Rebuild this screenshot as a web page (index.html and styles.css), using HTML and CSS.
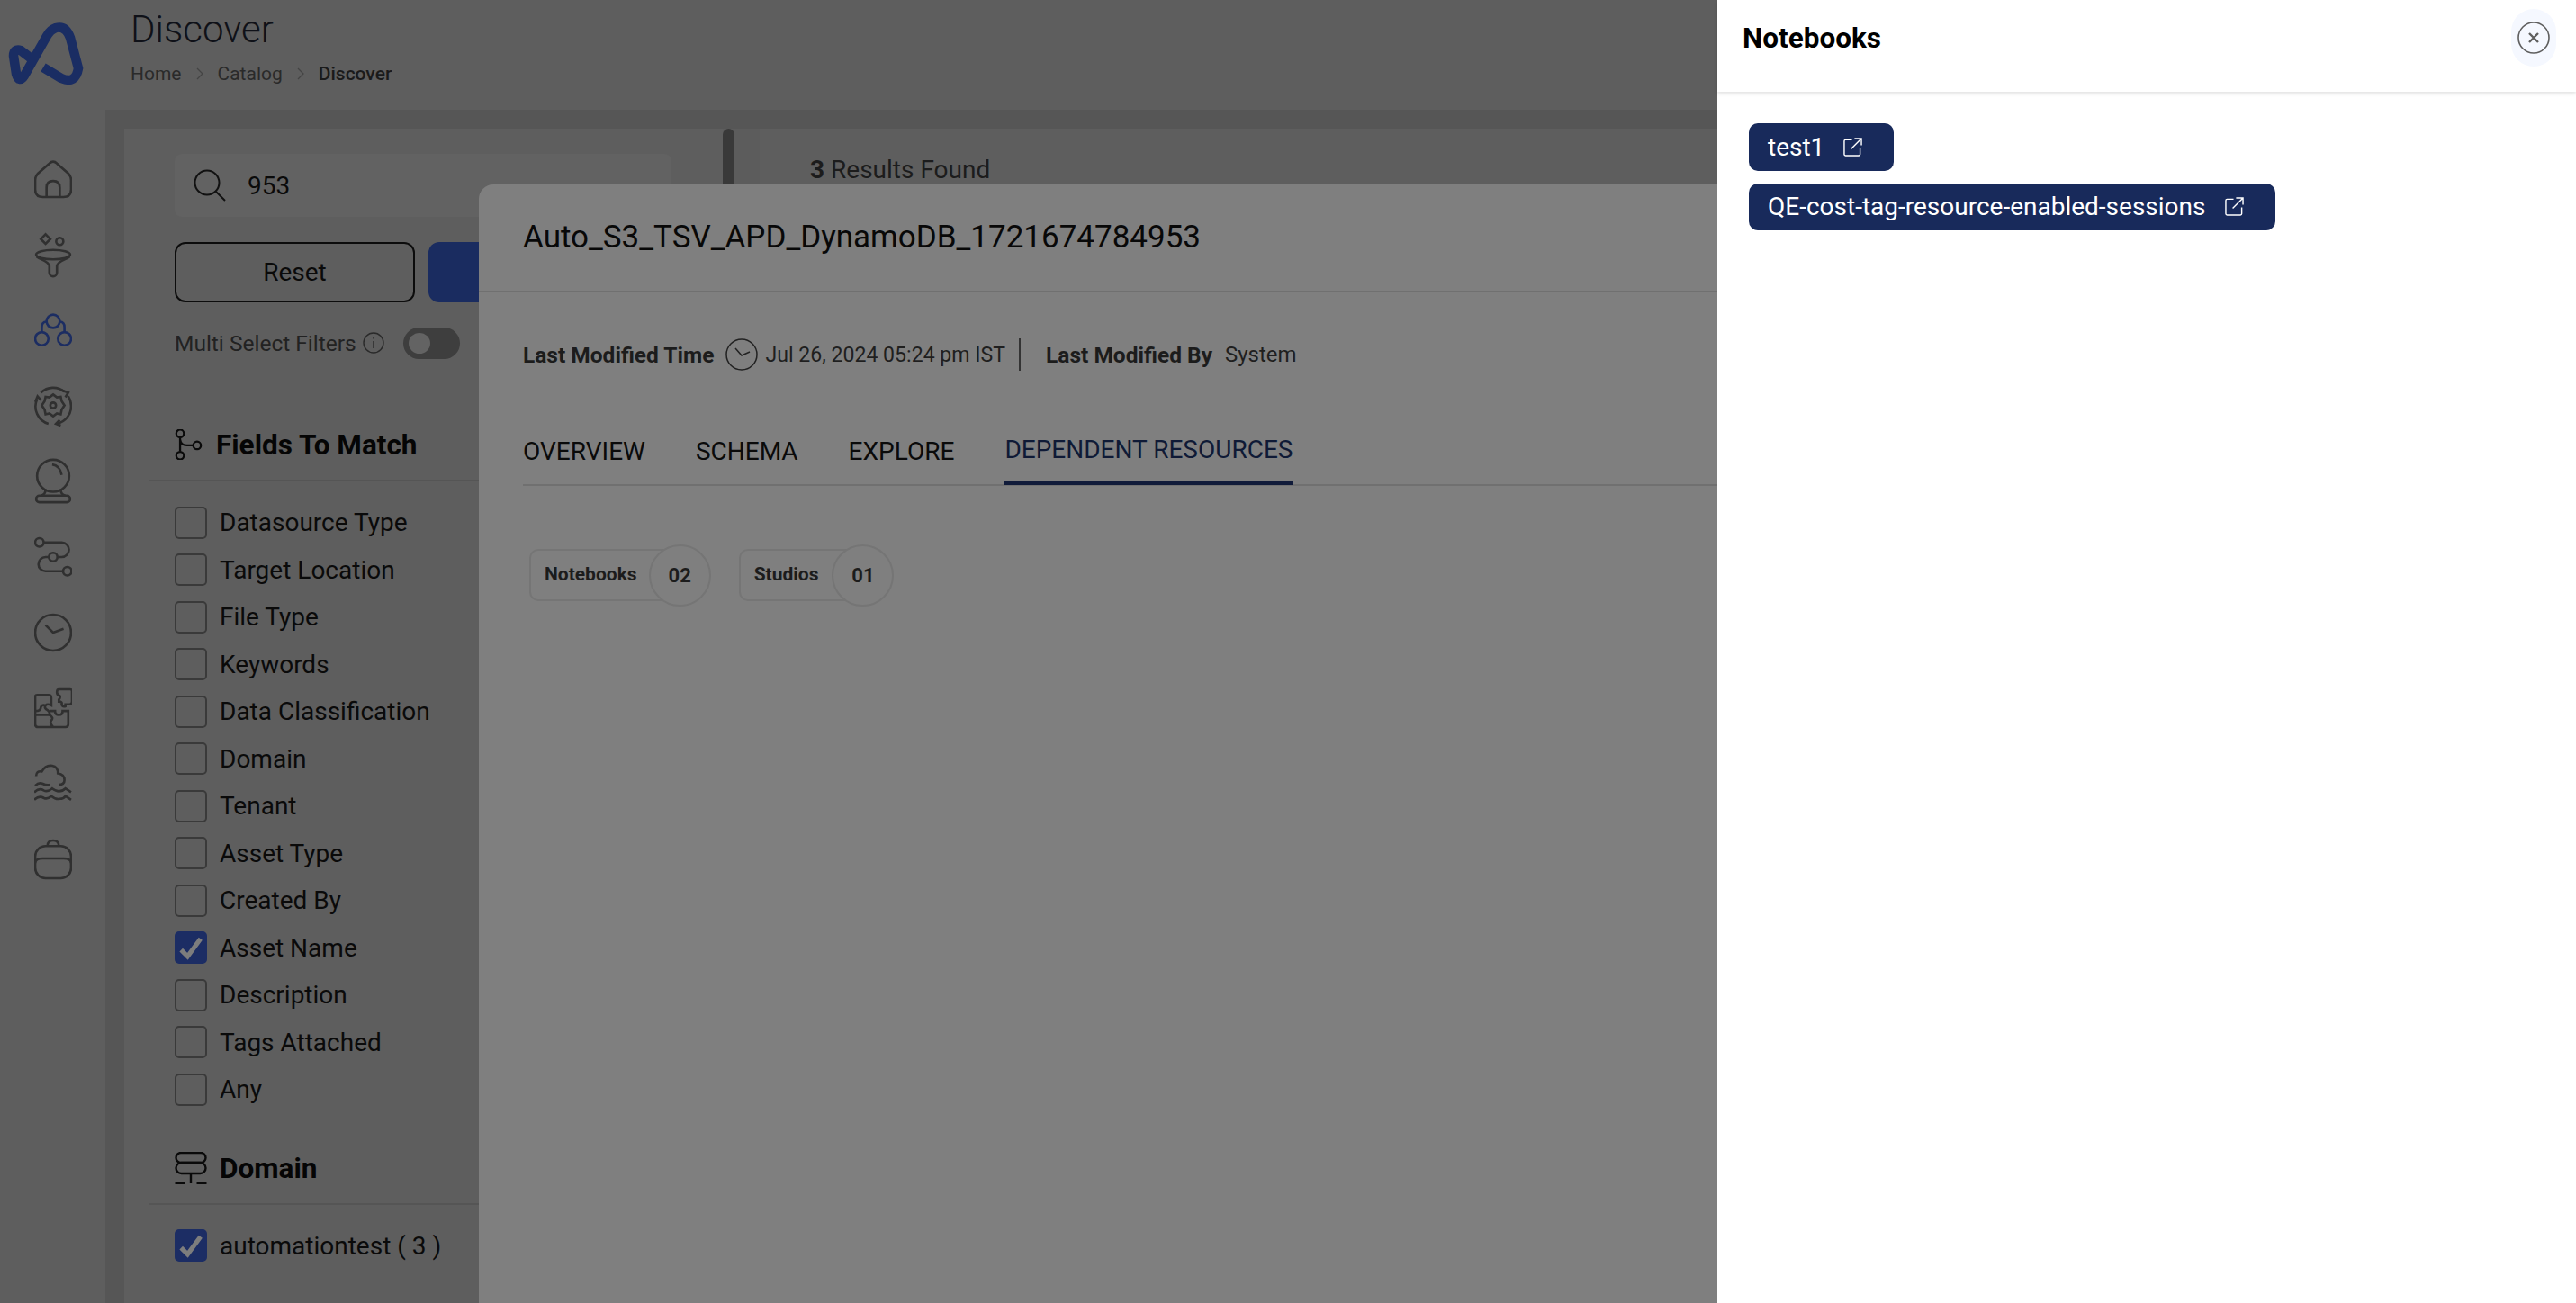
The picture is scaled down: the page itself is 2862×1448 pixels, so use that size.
FILE: index.html
```html
<!DOCTYPE html>
<html lang="en">
<head>
<meta charset="utf-8">
<title>Discover</title>
<link rel="stylesheet" href="styles.css">
</head>
<body>
<div class="app">
  <aside class="sidebar">
    <svg class="logo" viewBox="0 0 100 100" fill="none"><path d="M48 75 L68 87 Q84 94 87 76 L78 42 Q73 28 62 31 Q56 33 52 40 L27 84 Q21 93 18 82 L15 62 Q15 54 23 56 L36 66" stroke="#1a2d63" stroke-width="10.500"/></svg>
    <nav class="nav">
      <svg class="nav-icon" viewBox="0 0 40 40"><path d="M20 1.500 Q22 1.500 24 3.500 L36 14 Q39 17 39 21 V31 Q39 39 31 39 H9 Q1 39 1 31 V21 Q1 17 4 14 L16 3.500 Q18 1.500 20 1.500Z M13 39 V29 Q13 22 20 22 Q27 22 27 29 V39"/></svg>
      <svg class="nav-icon" viewBox="0 0 40 46"><path d="M12 1.500 L17 6.500 L12 11.500 L7 6.500Z"/><circle cx="27" cy="9" r="3.800"/><ellipse cx="20" cy="23" rx="18" ry="5"/><path d="M2.500 25 C8 29 15 30 16 35 V42 A4 4 0 0 0 24 42 V35 C25 30 32 29 37.500 25"/></svg>
      <svg class="nav-icon nav-active" viewBox="0 0 40 36"><circle cx="20" cy="8.500" r="7"/><circle cx="8" cy="27" r="7"/><circle cx="32" cy="27" r="7"/><path d="M13 9 Q8 9 8 15 V20 M27 9 Q32 9 32 15 V20"/></svg>
      <svg class="nav-icon" viewBox="0 0 40 42"><path d="M3 14 A19 19 0 0 0 15 40 M24 40 A19 19 0 0 0 39 21 A19 19 0 0 0 36 11 M32 6 A19 19 0 0 0 7 7"/><path d="M20 9 L24 12 L28 11.500 L29 16 L32 20.500 L29 25 L28 30 L24 29 L20 32 L16 29 L12 30 L11 25 L8 20.500 L11 16 L12 11.500 L16 12Z"/><circle cx="20" cy="20.500" r="3"/><path d="M29 4.500 L36 7 L33 12 M1 17 L3.500 11 L7 15 M27 36 L23 40 L28 42"/></svg>
      <svg class="nav-icon" viewBox="0 0 40 48"><circle cx="20" cy="18" r="17"/><path d="M19 6 Q27 7 29 17"/><path d="M12 32 Q12 38 7 39 M28 32 Q28 38 33 39"/><rect x="2" y="39" width="36" height="7" rx="3.500"/></svg>
      <svg class="nav-icon" viewBox="0 0 40 42"><circle cx="5.500" cy="5.500" r="4.500"/><circle cx="20" cy="21" r="4.500"/><circle cx="35" cy="36" r="4.500"/><path d="M10 5.500 H29 A7.700 7.700 0 0 1 29 21 H24.500 M15.500 21 H12 A7.500 7.500 0 0 0 12 36 H30.500"/></svg>
      <svg class="nav-icon" viewBox="0 0 40 42"><circle cx="20" cy="21" r="19"/><path d="M12 13 L20 21 L31 17"/></svg>
      <svg class="nav-icon" viewBox="0 0 40 42"><path d="M3 7 H15 Q18 7 18 10 V18 Q14 16 12 18 Q10 21 14 23 Q17 25 16 28 H1 V9 Q1 7 3 7Z"/><path d="M1 24 Q7 24 7 20 Q8 17 11 18 M1 28 V38 Q1 41 4 41 H33 Q36 41 36 38 V24 H30 Q30 28 26 28 Q22 28 22 24 H17 M16 28 Q21 31 18 34 Q16 37 20 41"/><path d="M26 1 H38 Q40 1 40 3 V14 Q40 17 36 17 H33 V19 Q30 20 29 17 Q30 14 26 14 V12 Q28 10 27 8 Q24 7 24 4 Q24 1 26 1Z"/></svg>
      <svg class="nav-icon" viewBox="0 0 40 40"><path d="M2 12 Q2 6 8 7 Q12 0 19 1 Q25 2 25 9 Q32 10 32 16 Q32 21 26 21"/><path d="M1 22 Q5 18 9 20 Q13 22 17 21 M0 29 Q5 24 10 27 Q14 29 19 25 Q23 28 26 28 Q30 28 33 25 L39 29 M0 37 Q5 32 10 35 Q14 37 18 33 Q23 37 27 36 Q31 36 33 33 L39 37"/></svg>
      <svg class="nav-icon" viewBox="0 0 40 42"><path d="M14 7 Q14 1 20 1 Q26 1 26 7"/><rect x="1" y="7" width="38" height="34" rx="11"/><path d="M1 25 Q1 20 9 20 H31 Q39 20 39 25"/></svg>
    </nav>
  </aside>

  <main class="main">
    <header class="topbar">
      <h1 class="page-title">Discover</h1>
      <div class="crumbs">
        <span>Home</span>
        <svg class="crumb-sep" viewBox="0 0 10 16"><path d="M2 2 L8 8 L2 14"/></svg>
        <span>Catalog</span>
        <svg class="crumb-sep" viewBox="0 0 10 16"><path d="M2 2 L8 8 L2 14"/></svg>
        <strong>Discover</strong>
      </div>
    </header>
    <div class="content">
      <section class="filters">
        <div class="search">
          <svg class="search-icon" viewBox="0 0 36 36"><circle cx="15" cy="15" r="13.500"/><path d="M25 25 L35 35"/></svg>
          <span>953</span>
        </div>
        <div class="actions">
          <div class="btn-reset">Reset</div>
          <div class="btn-apply"></div>
        </div>
        <div class="multi">
          <span>Multi Select Filters</span>
          <svg class="info" viewBox="0 0 24 24"><circle cx="12" cy="12" r="11"/><path d="M12 10 V18 M12 6 V7.500"/></svg>
          <div class="toggle"><i class="knob"></i></div>
        </div>
        <div class="group-head group-fields">
          <svg class="head-icon" viewBox="0 0 32 36"><circle cx="6" cy="5" r="4.500"/><circle cx="6" cy="31" r="4.500"/><circle cx="26" cy="19" r="4.500"/><path d="M6 10 V26 M6 12 Q7 19 14 19 H21"/></svg>
          <span>Fields To Match</span>
        </div>
        <ul class="checks">
          <li class="check"><i class="box"></i>Datasource Type</li>
          <li class="check"><i class="box"></i>Target Location</li>
          <li class="check"><i class="box"></i>File Type</li>
          <li class="check"><i class="box"></i>Keywords</li>
          <li class="check"><i class="box"></i>Data Classification</li>
          <li class="check"><i class="box"></i>Domain</li>
          <li class="check"><i class="box"></i>Tenant</li>
          <li class="check"><i class="box"></i>Asset Type</li>
          <li class="check"><i class="box"></i>Created By</li>
          <li class="check"><i class="box box-on"><svg viewBox="0 0 35 35"><path d="M7 20 L14 27 L28 8"/></svg></i>Asset Name</li>
          <li class="check"><i class="box"></i>Description</li>
          <li class="check"><i class="box"></i>Tags Attached</li>
          <li class="check"><i class="box"></i>Any</li>
        </ul>
        <div class="group-head group-domain">
          <svg class="head-icon head-domain" viewBox="0 0 35 36"><rect x="1" y="1" width="33" height="11" rx="5.500"/><rect x="1" y="12" width="33" height="12" rx="6"/><path d="M17.500 24 V35 M0 35 H11 M24 35 H35"/></svg>
          <span>Domain</span>
        </div>
        <ul class="checks">
          <li class="check"><i class="box box-on"><svg viewBox="0 0 35 35"><path d="M7 20 L14 27 L28 8"/></svg></i>automationtest ( 3 )</li>
        </ul>
      </section>
      <div class="scroll-track"><i class="scroll-thumb"></i></div>
      <section class="results"><b>3</b> Results Found</section>
    </div>
  </main>
</div>

<section class="modal">
  <h2 class="modal-title">Auto_S3_TSV_APD_DynamoDB_1721674784953</h2>
  <div class="meta">
    <b>Last Modified Time</b>
    <svg class="meta-clock" viewBox="0 0 36 36"><circle cx="18" cy="18" r="17"/><path d="M11 11 L18 19 L27 15"/></svg>
    <span class="meta-date">Jul 26, 2024 05:24 pm IST</span>
    <i class="meta-sep"></i>
    <b>Last Modified By</b>
    <span class="meta-by">System</span>
  </div>
  <div class="tabs">
    <span class="tab">OVERVIEW</span>
    <span class="tab">SCHEMA</span>
    <span class="tab">EXPLORE</span>
    <span class="tab tab-active">DEPENDENT RESOURCES</span>
  </div>
  <div class="counts">
    <div class="count"><span class="count-label">Notebooks</span><span class="count-num">02</span></div>
    <div class="count"><span class="count-label count-label-wide">Studios</span><span class="count-num">01</span></div>
  </div>
</section>

<aside class="drawer">
  <header class="drawer-head">
    <h2 class="drawer-title">Notebooks</h2>
    <div class="close">
      <svg viewBox="0 0 36 36"><circle cx="18" cy="18" r="17"/><path d="M13 13 L23 23 M23 13 L13 23"/></svg>
    </div>
  </header>
  <div class="links">
    <a class="link">test1<svg viewBox="0 0 22 22"><path d="M10 2.500 H2.500 Q1 2.500 1 4 V19.500 Q1 21 2.500 21 H18 Q19.500 21 19.500 19.500 V12 M9 13 L20.500 1.500 M13 1 H21 V9"/></svg></a>
    <a class="link">QE-cost-tag-resource-enabled-sessions<svg viewBox="0 0 22 22"><path d="M10 2.500 H2.500 Q1 2.500 1 4 V19.500 Q1 21 2.500 21 H18 Q19.500 21 19.500 19.500 V12 M9 13 L20.500 1.500 M13 1 H21 V9"/></svg></a>
  </div>
</aside>
</body>
</html>
```

FILE: styles.css
```css
* { box-sizing: border-box; }
html, body { margin: 0; height: 100%; overflow: hidden; }
body { font-family: Roboto, "Liberation Sans", sans-serif; background: #5f5f5f; color: #0a0a0a; position: relative; }
h1, h2, ul { margin: 0; padding: 0; font-weight: inherit; }
ul { list-style: none; }
i { display: block; }

.app { display: flex; height: 1448px; }

.sidebar { width: 117px; flex: none; background: #5e5e5e; display: flex; flex-direction: column; align-items: center; }
.logo { width: 100px; height: 100px; align-self: flex-start; display: block; }
.nav { margin-top: 57px; display: flex; flex-direction: column; align-items: center; }
.nav-icon { width: 42px; height: 84px; fill: none; stroke: #303030; stroke-width: 2.5; display: block; }
.nav-active { stroke: #1c2d62; }

.main { flex: 1; min-width: 0; display: flex; flex-direction: column; background: #565656; }
.topbar { height: 122px; flex: none; background: #5e5e5e; padding: 8px 0 0 28px; }
.page-title { font-size: 42px; line-height: 50px; font-weight: 300; color: #0f1118; }
.crumbs { display: flex; align-items: center; font-size: 21px; line-height: 24px; margin-top: 12px; color: #2a2a2a; }
.crumbs strong { font-weight: 500; color: #1a1a1a; }
.crumb-sep { width: 10px; height: 16px; margin: 0 15px; fill: none; stroke: #444; stroke-width: 1.3; }

.content { flex: 1; display: flex; padding: 21px 0 0 21px; min-height: 0; }
.filters { width: 665px; flex: none; background: #5e5e5e; padding: 28px 0 0 56px; position: relative; }
.search { width: 552px; height: 70px; background: #626262; border-radius: 8px; display: flex; align-items: center; padding-left: 21px; gap: 24px; font-size: 28px; }
.search-icon { width: 36px; height: 36px; fill: none; stroke: #111; stroke-width: 2; }
.actions { display: flex; gap: 15px; margin-top: 28px; }
.btn-reset { width: 267px; height: 67px; border: 2px solid #0c0c0c; border-radius: 12px; display: flex; align-items: center; justify-content: center; font-size: 28px; }
.btn-apply { width: 259px; height: 67px; background: #1a2c60; border-radius: 12px; }
.multi { display: flex; align-items: center; height: 36px; margin-top: 27px; font-size: 24.500px; color: #222; }
.info { width: 24px; height: 24px; margin-left: 7px; fill: none; stroke: #2a2a2a; stroke-width: 1.4; }
.toggle { width: 63px; height: 35px; margin-left: 21px; border-radius: 18px; background: #3e3e3e; padding: 6px; }
.knob { width: 24px; height: 23px; border-radius: 50%; background: #636363; }

.group-head { display: flex; align-items: center; gap: 15px; font-size: 31.500px; font-weight: 700; color: #050505; border-bottom: 2px solid #555; margin-left: -28px; padding-left: 28px; }
.group-fields { height: 70px; margin-top: 66px; padding-bottom: 10px; }
.group-domain { height: 73px; margin-top: 37px; padding-bottom: 6px; gap: 14px; }
.head-icon { width: 31px; height: 34px; fill: none; stroke: #0a0a0a; stroke-width: 2.4; }
.head-domain { width: 36px; height: 36px; }

.checks { padding-top: 27.500px; }
.check { display: flex; align-items: center; gap: 14px; height: 36px; margin-bottom: 16.500px; font-size: 28px; color: #0a0a0a; }
.box { width: 36px; height: 36px; flex: none; border: 2px solid #3a3a3a; border-radius: 5px; }
.box-on { background: #1c2d64; border-color: #1c2d64; position: relative; }
.box-on svg { position: absolute; inset: -2px; width: 36px; height: 36px; fill: none; stroke: #7d7d7d; stroke-width: 5; }

.scroll-track { width: 41px; flex: none; background: #5c5c5c; }
.scroll-thumb { width: 13px; height: 300px; border-radius: 7px; background: #393939; }
.results { flex: 1; background: #5e5e5e; padding: 30px 0 0 56px; font-size: 28px; line-height: 32px; color: #1c1c1c; }
.results b { font-weight: 700; }

.modal { position: absolute; left: 532px; top: 205px; width: 1400px; height: 1243px; background: #7f7f7f; border-top-left-radius: 16px; }
.modal-title { height: 120px; padding: 37px 0 0 49px; font-size: 35px; line-height: 44px; color: #080808; border-bottom: 2px solid #707070; }
.meta { display: flex; align-items: center; margin: 51px 0 0 49px; height: 36px; font-size: 24px; color: #1f1f1f; }
.meta b { font-size: 24.500px; font-weight: 700; color: #1c1c1c; }
.meta-clock { width: 36px; height: 36px; margin: 0 8px 0 13px; fill: none; stroke: #222; stroke-width: 1.500; }
.meta-date { font-size: 23.100px; }
.meta-sep { width: 2px; height: 36px; background: #333; margin: 0 28px 0 15px; }
.meta-by { margin-left: 14px; }
.tabs { display: flex; gap: 56px; margin: 52px 0 0 49px; height: 76px; border-bottom: 2px solid #707070; font-size: 28px; line-height: 36px; color: #0a0a0a; }
.tab { padding-top: 20px; }
.tab-active { color: #0f1a36; border-bottom: 4px solid #101b3a; height: 75px; padding-top: 18px; }
.counts { display: flex; gap: 31px; margin: 64px 0 0 56px; }
.count { display: flex; align-items: center; height: 70px; position: relative; }
.count-label { display: flex; align-items: center; height: 58px; border: 2px solid #757575; border-right: 0; border-radius: 10px 0 0 10px; padding: 0 37px 3px 15px; font-size: 21px; font-weight: 700; color: #1c1c1c; }
.count-label-wide { padding-right: 39px; }
.count-num { width: 69px; height: 69px; margin-left: -24px; border: 2px solid #757575; border-radius: 50%; background: #7f7f7f; display: flex; align-items: center; justify-content: center; font-size: 22px; font-weight: 700; color: #1c1c1c; }

.drawer { position: absolute; left: 1908px; top: 0; width: 954px; height: 1448px; background: #fff; }
.drawer-head { height: 102px; display: flex; align-items: flex-start; justify-content: space-between; padding: 0 22px 0 28px; box-shadow: 0 2px 4px rgba(0,0,0,.12); }
.drawer-title { font-size: 31.500px; line-height: 85px; font-weight: 700; color: #000; }
.close { width: 50px; height: 64px; margin-top: 10px; border-radius: 25px; background: #f5f8ff; display: flex; align-items: center; justify-content: center; }
.close svg { width: 36px; height: 36px; fill: none; stroke: #5f5f5f; stroke-width: 1.6; }
.close svg path { stroke-width: 2.4; }
.links { display: flex; flex-direction: column; align-items: flex-start; gap: 14px; padding: 35px 0 0 35px; }
.link { display: flex; align-items: center; height: 52.500px; padding: 0 35px 0 21px; background: #182a5b; border-radius: 10px; color: #fff; font-size: 28px; }
.link svg { width: 21px; height: 21px; margin-left: 21px; fill: none; stroke: #fff; stroke-width: 1.5; }
```
